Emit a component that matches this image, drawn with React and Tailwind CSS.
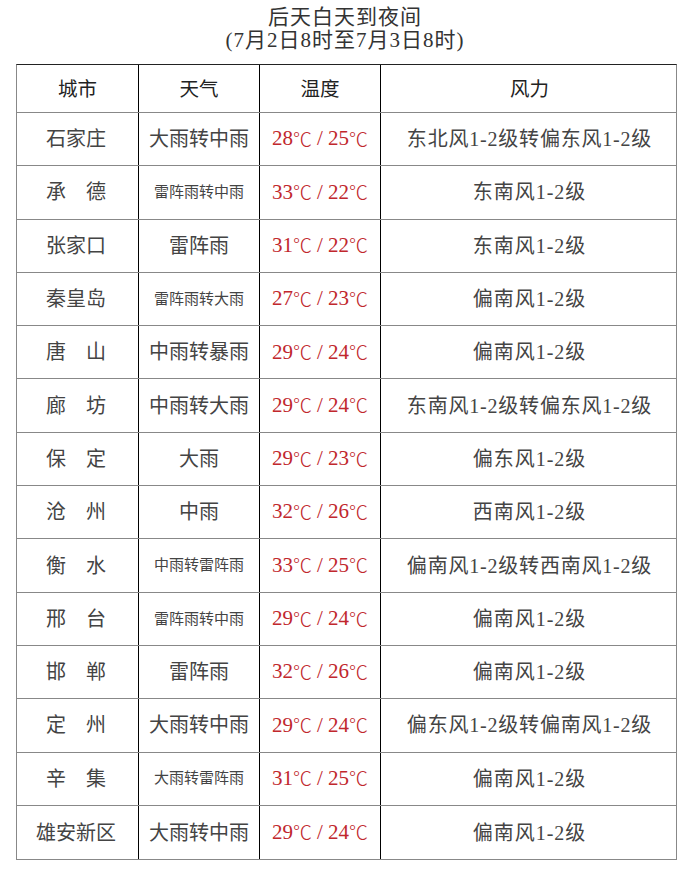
const rows = [
  ['石家庄', '大雨转中雨', ['28', '25'], '东北风1-2级转偏东风1-2级'],
  ['承　德', '雷阵雨转中雨', ['33', '22'], '东南风1-2级', true],
  ['张家口', '雷阵雨', ['31', '22'], '东南风1-2级'],
  ['秦皇岛', '雷阵雨转大雨', ['27', '23'], '偏南风1-2级', true],
  ['唐　山', '中雨转暴雨', ['29', '24'], '偏南风1-2级'],
  ['廊　坊', '中雨转大雨', ['29', '24'], '东南风1-2级转偏东风1-2级'],
  ['保　定', '大雨', ['29', '23'], '偏东风1-2级'],
  ['沧　州', '中雨', ['32', '26'], '西南风1-2级'],
  ['衡　水', '中雨转雷阵雨', ['33', '25'], '偏南风1-2级转西南风1-2级', true],
  ['邢　台', '雷阵雨转中雨', ['29', '24'], '偏南风1-2级', true],
  ['邯　郸', '雷阵雨', ['32', '26'], '偏南风1-2级'],
  ['定　州', '大雨转中雨', ['29', '24'], '偏东风1-2级转偏南风1-2级'],
  ['辛　集', '大雨转雷阵雨', ['31', '25'], '偏南风1-2级', true],
  ['雄安新区', '大雨转中雨', ['29', '24'], '偏南风1-2级'],
]

function Deg() {
  return <span style={{ fontFamily: '"Noto Sans CJK SC", sans-serif' }} className="text-[19px] font-light">℃</span>
}

export default function App() {
  return (
    <div
      className="w-[690px] h-[892px] bg-white text-[#444]"
      style={{ fontFamily: '"Liberation Serif", "Noto Sans CJK SC", serif' }}
    >
      <div className="pt-[6px] text-center text-[21px] leading-[23px] text-[#333] tracking-[1px]">
        <div>后天白天到夜间</div>
        <div>(7月2日8时至7月3日8时)</div>
      </div>
      <div className="ml-[16px] mt-[12px] w-[661px] border-t border-t-[#222] border-x border-x-[#888] border-b border-b-[#888]">
        <div className="grid grid-cols-[122px_121px_121px_297px] h-[48px] border-b border-[#888] text-[19.5px] text-[#222]">
          <div className="flex items-center justify-center pt-[3px] border-r border-black">城市</div>
          <div className="flex items-center justify-center pt-[3px] border-r border-black">天气</div>
          <div className="flex items-center justify-center pt-[3px] border-r border-black">温度</div>
          <div className="flex items-center justify-center pt-[3px]">风力</div>
        </div>
        {rows.map(function (r, i) {
          var long = r[3].length > 8
          return (
            <div
              key={i}
              className={
                'grid grid-cols-[122px_121px_121px_297px] h-[53.3px] ' +
                (i < rows.length - 1 ? 'border-b border-[#888]' : '')
              }
            >
              <div className="flex items-center justify-center pr-[3px] border-r border-black text-[20px]">{r[0]}</div>
              <div
                className={
                  'flex items-center justify-center border-r border-black ' +
                  (r[4] ? 'text-[15px]' : 'text-[20px]')
                }
              >
                {r[1]}
              </div>
              <div className="flex items-center justify-center border-r border-black text-[21px] text-[#c1272d]">
                <span>{r[2][0]}</span>
                <Deg />
                <span className="mx-[5px]">/</span>
                <span>{r[2][1]}</span>
                <Deg />
              </div>
              <div
                className={
                  'flex items-center justify-center ' +
                  (long ? 'text-[20px] tracking-[0.8px]' : 'text-[20px] tracking-[1px]')
                }
              >
                {r[3]}
              </div>
            </div>
          )
        })}
      </div>
    </div>
  )
}
